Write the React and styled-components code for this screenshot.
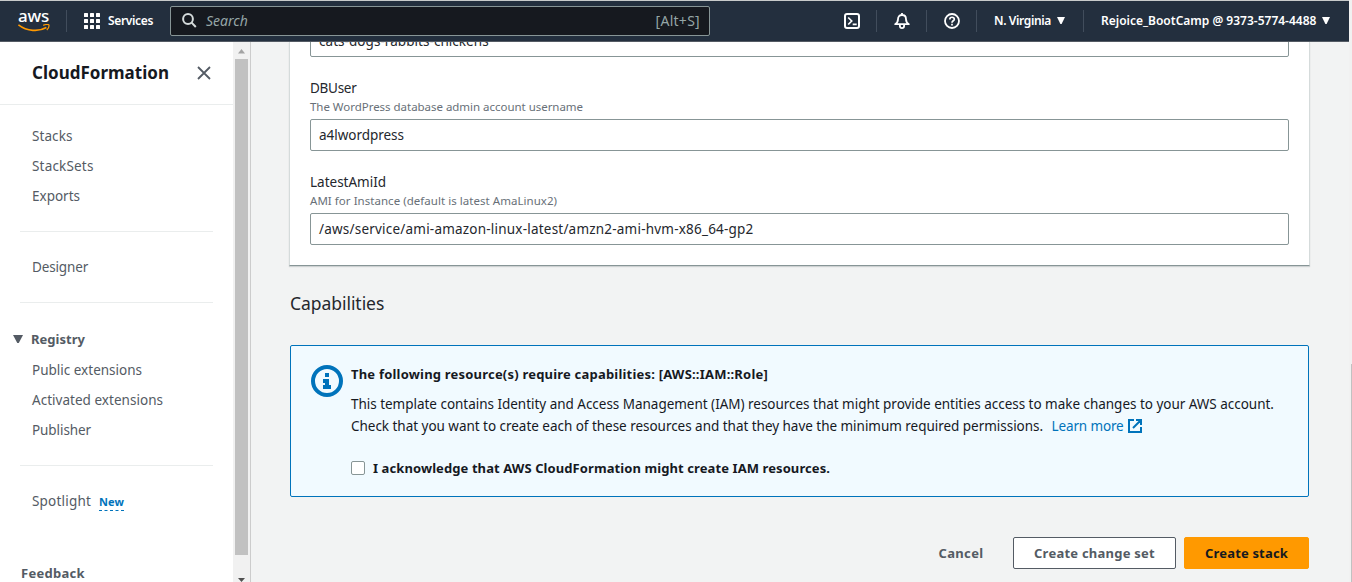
import React from "react";
import styled, { createGlobalStyle } from "styled-components";

const Global = createGlobalStyle`
  * { box-sizing: border-box; }
  body {
    margin: 0;
    overflow: hidden;
    background: #f2f3f3;
    font-family: "Noto Sans", "Open Sans", sans-serif;
    font-size: 13.5px;
    color: #16191f;
  }
`;

const Page = styled.div`
  height: 582px;
  width: 1352px;
  display: flex;
  background: #f1f1f1;
  white-space: nowrap;
`;

const Frame = styled.div`
  width: 1349px;
  display: flex;
  flex-direction: column;
  border-top: 1px solid #c8cbcb;
`;

const PageScroll = styled.div`
  width: 3px;
  padding-top: 364px;
  display: flex;
  justify-content: flex-end;
`;

const PageThumb = styled.div`
  width: 1px;
  background: #c1c1c1;
`;

const Text = styled.span`
  letter-spacing: ${(p) => p.$ls || 0}px;
`;

/* Top navigation */
const TopBar = styled.header`
  height: 41px;
  flex: none;
  display: flex;
  align-items: center;
  background: #232f3e;
  border-bottom: 1px solid #545b64;
  color: #fff;
  font-size: 12px;
  font-weight: 600;
`;

const Logo = styled.div`
  width: 66px;
  height: 40px;
  padding: 6px 0 0 18px;
  display: flex;
  flex-direction: column;
  font-size: 17px;
  line-height: 17px;
  font-weight: 500;
`;

const Divider = styled.div`
  width: 1px;
  height: 22px;
  background: #414d5c;
`;

const Services = styled.div`
  width: 103px;
  padding: 0 0 1px 17px;
  display: flex;
  align-items: center;
  gap: 8px;
  svg { position: relative; top: 0.5px; }
`;

const SearchBox = styled.div`
  width: 540px;
  height: 30px;
  padding: 0 9px 1px 11px;
  display: flex;
  align-items: center;
  background: #16191f;
  border: 1px solid #879596;
  border-radius: 2px;
  color: #95a5a6;
  font-size: 14px;
  font-weight: 400;
`;

const SearchHint = styled(Text)`
  flex: 1;
  margin-left: 9px;
  font-style: italic;
`;

const NavRight = styled.div`
  margin-left: auto;
  display: flex;
  align-items: center;
`;

const NavIcon = styled.div`
  width: 49px;
  display: flex;
  justify-content: center;
`;

const NavMenu = styled.div`
  width: ${(p) => p.$w}px;
  padding: 0 ${(p) => p.$pr}px 1px 17px;
  display: flex;
  align-items: center;
  justify-content: space-between;
`;

/* Side navigation */
const Body = styled.div`
  flex: 1;
  min-height: 0;
  display: flex;
`;

const Sidebar = styled.nav`
  width: 233px;
  overflow: hidden;
  background: #fff;
  color: #545b64;
`;

const SideHeader = styled.div`
  height: 63px;
  padding: 0 22px 1px 32px;
  display: flex;
  align-items: center;
  justify-content: space-between;
  border-bottom: 1px solid #eaeded;
  color: #16191f;
  font-size: 17px;
  font-weight: 700;
  svg { margin-top: 1px; }
`;

const SideGroup = styled.div`
  margin: 0 20px;
  padding: ${(p) => p.$pad};
  border-bottom: ${(p) => (p.$last ? "none" : "1px solid #eaeded")};
`;

const SideLink = styled.div`
  height: 30px;
  padding-left: 12px;
  display: flex;
  align-items: center;
`;

const SideSection = styled.div`
  height: 31px;
  padding-bottom: 2px;
  margin-left: -7px;
  display: flex;
  align-items: center;
  gap: 8px;
  font-size: 13px;
  font-weight: 700;
`;

const NewTag = styled(Text)`
  margin: 1px 0 0 8px;
  height: 18px;
  line-height: 17px;
  border-bottom: 1px dashed #0073bb;
  color: #0073bb;
  font-size: 11px;
  font-weight: 700;
`;

const Feedback = styled.div`
  padding: 47px 0 0 21px;
  line-height: 20px;
  font-size: 13px;
  font-weight: 700;
`;

const ScrollTrack = styled.div`
  width: 17px;
  padding: 7px 0 0;
  display: flex;
  flex-direction: column;
  align-items: center;
  background: #f1f1f1;
  svg { flex: none; }
`;

const ScrollThumb = styled.div`
  width: 13px;
  height: 496px;
  margin: 5px 0 23px;
  flex: none;
  background: #c1c1c1;
`;

/* Main content */
const Main = styled.main`
  flex: 1;
  min-width: 0;
  overflow: hidden;
  padding: 0 39px 0 38px;
  background: #f2f3f3;
  border-left: 1px solid #ccc;
`;

const Card = styled.section`
  height: 224px;
  padding: 0 20px;
  background: #fff;
  border: solid #d5dbdb;
  border-width: 0 1px;
  border-bottom: 1px solid #879596;
  box-shadow: 0 1px 1px rgba(0, 28, 36, 0.15);
  color: #24272d;
`;

const Field = styled.div`
  display: flex;
  flex-direction: column;
  padding-top: 21px;
`;

const Label = styled(Text)`
  line-height: 20px;
`;

const Hint = styled(Text)`
  height: 21px;
  line-height: 17px;
  font-size: 11.5px;
  color: #687078;
`;

const Input = styled.div`
  height: 32px;
  padding: 0 8px;
  display: flex;
  align-items: center;
  border: 1px solid #879596;
  border-radius: 2px;
  background: #fff;
`;

const ClippedInput = styled.div`
  height: 15px;
  display: flex;
  flex-direction: column;
  justify-content: flex-end;
  overflow: hidden;
  ${Input} { flex: none; }
`;

const SectionTitle = styled.h2`
  margin: 25px 0 29px 1px;
  height: 25px;
  line-height: 25px;
  font-size: 17.5px;
  font-weight: 400;
  color: #24272d;
`;

const InfoBox = styled.section`
  height: 152px;
  margin: 0 1px;
  padding: 18px 20px 0;
  display: flex;
  gap: 8px;
  background: #f1faff;
  border: 1px solid #0073bb;
  border-radius: 2px;
`;

const InfoIconWrap = styled.div`
  width: 32px;
  padding-top: 1px;
`;

const InfoTitle = styled.div`
  line-height: 20px;
  font-size: 13px;
  font-weight: 700;
`;

const InfoText = styled.p`
  margin: 9px 0 20px;
  line-height: 22px;
`;

const Link = styled.a`
  margin-left: 5px;
  color: #0073bb;
  svg { margin-left: 4px; vertical-align: -2px; }
`;

const CheckRow = styled.label`
  height: 22px;
  display: flex;
  align-items: center;
  gap: 8px;
  font-size: 13px;
  font-weight: 700;
`;

const CheckBox = styled.span`
  width: 14px;
  height: 14px;
  background: #fff;
  border: 1px solid #879596;
  border-radius: 2px;
`;

const Actions = styled.div`
  margin: 40px 1px 0 0;
  display: flex;
  justify-content: flex-end;
  gap: 8px;
`;

const Button = styled.button`
  width: ${(p) => p.$w}px;
  height: 32px;
  padding: 0;
  font: 700 13px "Noto Sans", sans-serif;
  letter-spacing: ${(p) => p.$ls}px;
  border-radius: 2px;
  border: 1px solid
    ${(p) => ({ normal: "#545b64", primary: "#ff9900", link: "transparent" })[p.$kind]};
  background: ${(p) => ({ normal: "#fff", primary: "#ff9900", link: "transparent" })[p.$kind]};
  color: ${(p) => (p.$kind === "primary" ? "#16191f" : "#545b64")};
`;

const Caret = ({ w = 8, h = 7 }) => (
  <svg width={w} height={h} viewBox="0 0 8 7" preserveAspectRatio="none">
    <path d="M0 0h8L4.6 7H3.4z" fill="currentColor" />
  </svg>
);

const Smile = () => (
  <svg width="32" height="8" viewBox="0 0 32 8" fill="none">
    <path d="M0.4 0.8C9 7.5 21 8 28.4 3.6" stroke="#f90" strokeWidth="1.7" />
    <path d="M25.2 1.4C27.5 0.3 31 0.2 31 1.1C31.2 2.5 30 5 28.8 6" stroke="#f90" strokeWidth="1.2" />
  </svg>
);

const GridIcon = () => (
  <svg width="16" height="16" fill="#fff">
    {[0, 6, 12].map((y) =>
      [0, 6, 12].map((x) => <rect key={`${x}-${y}`} x={x} y={y} width="4" height="4" rx="0.5" />)
    )}
  </svg>
);

const SearchIcon = () => (
  <svg width="15" height="15" fill="none" stroke="#d5dbdb" strokeWidth="2">
    <circle cx="6" cy="6" r="4.9" />
    <path d="M9.4 9.4l4.4 4.6" />
  </svg>
);

const ShellIcon = () => (
  <svg width="16" height="16" fill="none" stroke="#fff" strokeWidth="2">
    <rect x="1" y="1" width="14" height="14" rx="2" />
    <path d="M4.2 4.5L7.7 8L4.2 11.5M8.7 11.3h4" strokeWidth="1.7" />
  </svg>
);

const BellIcon = () => (
  <svg width="16" height="16" fill="none" stroke="#fff" strokeWidth="1.8">
    <path d="M8 0v2M1.2 11.2C3.2 9.8 4 8.4 4 6.200C4 3.600 5.600 2 8 2s4 1.600 4 4.200c0 2.200.8 3.600 2.800 5z" strokeLinejoin="round" />
    <path d="M5.900 11.800v1.200a2.100 2.100 0 0 0 4.200 0v-1.200" />
  </svg>
);

const HelpIcon = () => (
  <svg width="16" height="16" fill="none" stroke="#fff" strokeWidth="1.8">
    <circle cx="8" cy="8" r="7" />
    <path d="M5.800 6.500C5.800 3.500 10.300 3.600 10.300 6.200C10.300 7.800 8 7.800 8 9.700M8 10.700v1.800" strokeWidth="1.700" />
  </svg>
);

const CloseIcon = () => (
  <svg width="14" height="14" fill="none" stroke="#545b64" strokeWidth="1.8">
    <path d="M1 1l12 12M13 1L1 13" />
  </svg>
);

const InfoIcon = () => (
  <svg width="32" height="32" fill="none">
    <circle cx="16" cy="16" r="14" stroke="#0073bb" strokeWidth="4" />
    <path d="M14 8h4v4h-4zM12 14h6v6h2v4h-8v-4h2v-2h-2z" fill="#0073bb" />
  </svg>
);

const ExternalIcon = () => (
  <svg width="14" height="14" fill="none" stroke="#0073bb" strokeWidth="2">
    <path d="M6 1H1v12h12V8M8 1h5v5M13 1L5 9" />
  </svg>
);

export default function App() {
  return (
    <>
      <Global />
      <Page>
        <Frame>
          <TopBar>
            <Logo><Text $ls={-0.2}>aws</Text><Smile /></Logo>
            <Divider />
            <Services><GridIcon /><Text $ls={-0.34}>Services</Text></Services>
            <SearchBox>
              <SearchIcon />
              <SearchHint>Search</SearchHint>
              <Text $ls={0.28}>[Alt+S]</Text>
            </SearchBox>
            <NavRight>
              <NavIcon><ShellIcon /></NavIcon>
              <Divider />
              <NavIcon><BellIcon /></NavIcon>
              <Divider />
              <NavIcon><HelpIcon /></NavIcon>
              <Divider />
              <NavMenu $w={106} $pr={18}><Text $ls={-0.36}>N. Virginia</Text><Caret /></NavMenu>
              <Divider />
              <NavMenu $w={265} $pr={19}>
                <Text>Rejoice_BootCamp @ 9373-5774-4488</Text><Caret />
              </NavMenu>
            </NavRight>
          </TopBar>
          <Body>
            <Sidebar>
              <SideHeader><Text $ls={0.01}>CloudFormation</Text><CloseIcon /></SideHeader>
              <SideGroup $pad="16px 0 20px">
                <SideLink><Text $ls={0.08}>Stacks</Text></SideLink>
                <SideLink><Text $ls={0.18}>StackSets</Text></SideLink>
                <SideLink><Text>Exports</Text></SideLink>
              </SideGroup>
              <SideGroup $pad="20px 0 20px">
                <SideLink><Text $ls={-0.15}>Designer</Text></SideLink>
              </SideGroup>
              <SideGroup $pad="21px 0 20px">
                <SideSection><Caret w={10} h={8} /><Text $ls={0.03}>Registry</Text></SideSection>
                <SideLink><Text>Public extensions</Text></SideLink>
                <SideLink><Text $ls={0.03}>Activated extensions</Text></SideLink>
                <SideLink><Text $ls={-0.08}>Publisher</Text></SideLink>
              </SideGroup>
              <SideGroup $pad="20px 0 0" $last>
                <SideLink><Text $ls={0.2}>Spotlight</Text><NewTag $ls={0.1}>New</NewTag></SideLink>
              </SideGroup>
              <Feedback><Text $ls={0.29}>Feedback</Text></Feedback>
            </Sidebar>
            <ScrollTrack>
              <svg width="7" height="5"><path d="M3.5 0L7 4.500H0z" fill="#a3a3a3" /></svg>
              <ScrollThumb />
              <svg width="7" height="4"><path d="M0 0h7L3.500 4z" fill="#505050" /></svg>
            </ScrollTrack>
            <Main>
              <Card>
                <ClippedInput><Input><Text $ls={0.05}>cats-dogs-rabbits-chickens</Text></Input></ClippedInput>
                <Field>
                  <Label $ls={-0.28}>DBUser</Label>
                  <Hint $ls={-0.03}>The WordPress database admin account username</Hint>
                  <Input><Text $ls={-0.03}>a4lwordpress</Text></Input>
                </Field>
                <Field>
                  <Label>LatestAmiId</Label>
                  <Hint $ls={0.04}>AMI for Instance (default is latest AmaLinux2)</Hint>
                  <Input><Text $ls={0.21}>/aws/service/ami-amazon-linux-latest/amzn2-ami-hvm-x86_64-gp2</Text></Input>
                </Field>
              </Card>
              <SectionTitle><Text $ls={-0.05}>Capabilities</Text></SectionTitle>
              <InfoBox>
                <InfoIconWrap><InfoIcon /></InfoIconWrap>
                <div>
                  <InfoTitle><Text $ls={0.205}>The following resource(s) require capabilities: [AWS::IAM::Role]</Text></InfoTitle>
                  <InfoText>
                    <Text $ls={-0.025}>This template contains Identity and Access Management (IAM) resources that might provide entities access to make changes to your AWS account.</Text>
                    <br />
                    <Text $ls={-0.03}>Check that you want to create each of these resources and that they have the minimum required permissions.</Text>{" "}
                    <Link><Text $ls={-0.14}>Learn more</Text><ExternalIcon /></Link>
                  </InfoText>
                  <CheckRow>
                    <CheckBox />
                    <Text $ls={0.088}>I acknowledge that AWS CloudFormation might create IAM resources.</Text>
                  </CheckRow>
                </div>
              </InfoBox>
              <Actions>
                <Button $kind="link" $w={88} $ls={0.34}>Cancel</Button>
                <Button $kind="normal" $w={163} $ls={0.24}>Create change set</Button>
                <Button $kind="primary" $w={125} $ls={0.17}>Create stack</Button>
              </Actions>
            </Main>
          </Body>
        </Frame>
        <PageScroll><PageThumb /></PageScroll>
      </Page>
    </>
  );
}
